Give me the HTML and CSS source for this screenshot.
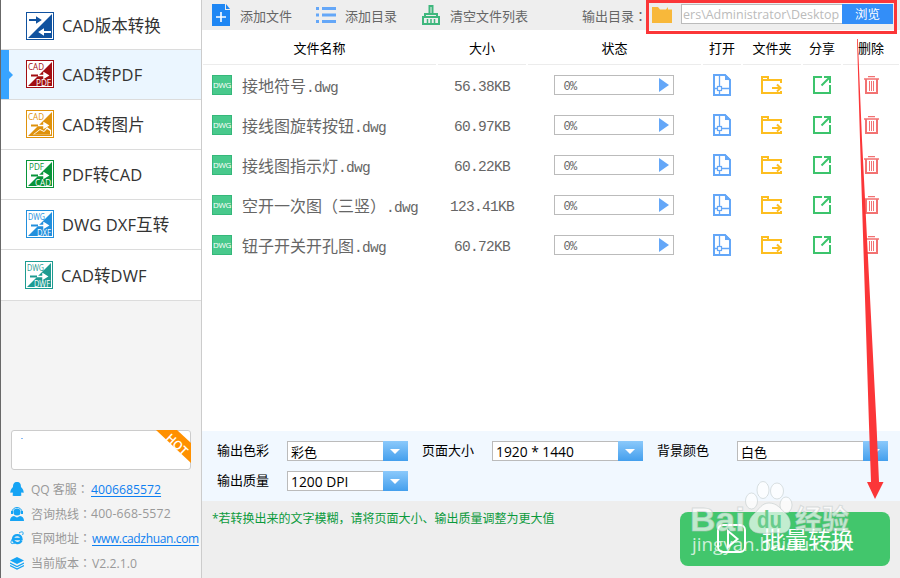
FILE: index.html
```html
<!DOCTYPE html>
<html lang="zh-CN">
<head>
<meta charset="utf-8">
<title>CAD转换器</title>
<link rel="stylesheet" href="styles.css">
</head>
<body>
<svg class="defs" width="0" height="0">
  <symbol id="open" viewBox="0 0 18 22"><path d="M1 1h11l5 5v15H1zM6.500 1v20M1 14.500h16" fill="none" stroke="#64a7f8" stroke-width="1.300"/><path d="M1 1h11l5 5v15H1z" fill="none" stroke="#64a7f8" stroke-width="2"/><path d="M12 0v6h6z" fill="#64a7f8"/><rect x="4.500" y="12.500" width="4" height="4" fill="#fff" stroke="#64a7f8" stroke-width="1.200"/></symbol>
  <symbol id="folder" viewBox="0 0 22 18"><path d="M20 7V4H1v13h19v-2M1 4V1h6v3" fill="none" stroke="#fdbe20" stroke-width="2"/><path d="M11 12h8M16 8.500l3.500 3.500-3.500 3.500" fill="none" stroke="#fdbe20" stroke-width="2"/></symbol>
  <symbol id="share" viewBox="0 0 18 18"><path d="M9 1H1v16h16V9M8.500 9.500 16 2" fill="none" stroke="#3cc46c" stroke-width="2"/><path d="M11 0h7v7h-2V2h-5z" fill="#3cc46c"/></symbol>
  <symbol id="trash" viewBox="0 0 16 18"><path d="M4 .5h7M0 3h15" fill="none" stroke="#f27272" stroke-width="1.500"/><path d="M2 3v14h11V3" fill="none" stroke="#f27272" stroke-width="2"/><path d="M5.500 5v10M7.500 5v10M9.500 5v10" stroke="#f27272"/></symbol>
</svg>
<div class="app">
  <aside class="sidebar">
    <nav class="menu">
      <div class="item first"><svg class="logo" viewBox="0 0 28 28"><rect x=".5" y=".5" width="27" height="27" fill="#fff" stroke="#10529f"/><path d="M26 2v24H2z" fill="#10529f"/><path d="M3 8h8M11 6v4l3-2z" stroke="#10529f" fill="#10529f" stroke-width="2"/><path d="M25 20h-8M17 18v4l-3-2z" stroke="#fff" fill="#fff" stroke-width="2"/></svg><span>CAD版本转换</span></div>
      <div class="item active"><svg class="logo" viewBox="0 0 28 28"><rect x=".5" y=".5" width="27" height="27" fill="#fff" stroke="#a20e12"/><path d="M26 2v24H2z" fill="#a20e12"/><path d="M5 15.500h7" stroke="#a20e12" stroke-width="2"/><path d="M12 15.500h6M18 13l4 2.500-4 2.500z" stroke="#fff" stroke-width="1.500" fill="#fff"/><text x="2" y="10" class="tiny" textLength="16" lengthAdjust="spacingAndGlyphs" fill="#a20e12">CAD</text><text x="10" y="25.500" class="tiny" textLength="15" lengthAdjust="spacingAndGlyphs" fill="#fff">PDF</text></svg><span>CAD转PDF</span></div>
      <div class="item"><svg class="logo" viewBox="0 0 28 28"><rect x=".5" y=".5" width="27" height="27" fill="#fff" stroke="#df920c"/><path d="M26 2v24H2z" fill="#df920c"/><path d="M7 24.500 14 19l4 2 3-4 4 3v4.500z" fill="#fff"/><path d="M8 24.500 14 20l4 2 3-3 3 2v3.500z" fill="#df920c"/><path d="M5 15.500h7" stroke="#df920c" stroke-width="2"/><path d="M12 15.500h6M18 13l4 2.500-4 2.500z" stroke="#fff" stroke-width="1.500" fill="#fff"/><text x="2" y="10" class="tiny" textLength="16" lengthAdjust="spacingAndGlyphs" fill="#df920c">CAD</text></svg><span>CAD转图片</span></div>
      <div class="item"><svg class="logo" viewBox="0 0 28 28"><rect x=".5" y=".5" width="27" height="27" fill="#fff" stroke="#08943a"/><path d="M26 2v24H2z" fill="#08943a"/><path d="M5 15.500h7" stroke="#08943a" stroke-width="2"/><path d="M12 15.500h6M18 13l4 2.500-4 2.500z" stroke="#fff" stroke-width="1.500" fill="#fff"/><text x="3" y="10" class="tiny" textLength="15" lengthAdjust="spacingAndGlyphs" fill="#08943a">PDF</text><text x="9" y="25.500" class="tiny" textLength="16" lengthAdjust="spacingAndGlyphs" fill="#fff">CAD</text></svg><span>PDF转CAD</span></div>
      <div class="item"><svg class="logo" viewBox="0 0 28 28"><rect x=".5" y=".5" width="27" height="27" fill="#fff" stroke="#228fdc"/><path d="M26 2v24H2z" fill="#228fdc"/><path d="M5 15.500h7" stroke="#228fdc" stroke-width="2"/><path d="M12 15.500h6M18 13l4 2.500-4 2.500z" stroke="#fff" stroke-width="1.500" fill="#fff"/><text x="2" y="10" class="tiny" textLength="17" lengthAdjust="spacingAndGlyphs" fill="#228fdc">DWG</text><text x="11" y="25.500" class="tiny" textLength="14" lengthAdjust="spacingAndGlyphs" fill="#fff">DXF</text></svg><span>DWG DXF互转</span></div>
      <div class="item last"><svg class="logo" viewBox="0 0 28 28"><rect x=".5" y=".5" width="27" height="27" fill="#fff" stroke="#1d9b91"/><path d="M26 2v24H2z" fill="#1d9b91"/><path d="M5 15.500h7" stroke="#1d9b91" stroke-width="2"/><path d="M12 15.500h6M18 13l4 2.500-4 2.500z" stroke="#fff" stroke-width="1.500" fill="#fff"/><text x="2" y="10" class="tiny" textLength="17" lengthAdjust="spacingAndGlyphs" fill="#1d9b91">DWG</text><text x="9" y="25.500" class="tiny" textLength="16" lengthAdjust="spacingAndGlyphs" fill="#fff">DWF</text></svg><span>CAD转DWF</span></div>
    </nav>
    <div class="promo"><span class="dash"></span><svg class="hot" width="36" height="34" viewBox="0 0 36 34"><path d="M1 0h21l14 13v20z" fill="#ff9000"/><text transform="translate(10 9) rotate(43)" textLength="25" lengthAdjust="spacingAndGlyphs" fill="#fff">HOT</text></svg></div>
    <div class="contacts">
      <div class="contact"><svg width="14" height="14" viewBox="0 0 14 14"><path d="M7 0C4 0 3 2 3 5 1 7 0 9 .5 11c.7 0 1.200-.5 1.700-1 .2 1 .6 1.500 1 2-1 .5-1 2 .8 2h6c1.800 0 1.800-1.500.8-2 .4-.5.800-1 1-2 .5.5 1 1 1.700 1C14 9 13 7 11 5c0-3-1-5-4-5z" fill="#16a4f4"/></svg><span class="label">QQ 客服<em lang="zh-TW">：</em></span><a class="tel">4006685572</a></div>
      <div class="contact"><svg width="14" height="14" viewBox="0 0 14 14"><circle cx="7" cy="5" r="3.600" fill="#16a4f4"/><path d="M2 5a5 4.500 0 0 1 10 0" fill="none" stroke="#16a4f4"/><path d="M1 4h2v3H1zM11 4h2v3h-2zM0 14c0-3 1.500-4.500 4-5l3 1.500L10 9c2.500.5 4 2 4 5z" fill="#16a4f4"/></svg><span class="label">咨询热线<em lang="zh-TW">：</em></span><span class="tel hotline">400-668-5572</span></div>
      <div class="contact"><svg width="14" height="14" viewBox="0 0 14 14"><path d="M11.500 9.500C9 14 3 12 3 8c0-5 8-5.500 8.500 0H4" fill="none" stroke="#16a4f4" stroke-width="2.300"/><path d="M9 2c4-2.500 5-.5 3.500 2M3 7c-3 4-3 7 2 5" fill="none" stroke="#16a4f4"/></svg><span class="label">官网地址<em lang="zh-TW">：</em></span><a class="site">www.cadzhuan.com</a></div>
      <div class="contact"><svg width="14" height="14" viewBox="0 0 14 14"><path d="m7 1 7 3.500L7 8 0 4.500z" fill="#16a4f4"/><path d="m0 7 7 3.500L14 7M0 9.500 7 13l7-3.500" fill="none" stroke="#16a4f4" stroke-width="1.300"/></svg><span class="label">当前版本<em lang="zh-TW">：</em></span><span class="ver">V2.2.1.0</span></div>
    </div>
  </aside>
  <main class="main">
    <header class="toolbar">
      <div class="tool add"><svg width="18" height="22" viewBox="0 0 18 22"><path d="M0 0h13v6h5v16H0z" fill="#1f87f4"/><path d="m14 0 4 5h-4z" fill="#1f87f4"/><path d="M4 13h10M9 8v10" stroke="#fff" stroke-width="1.600"/></svg><span>添加文件</span></div>
      <div class="tool list"><svg width="20" height="16" viewBox="0 0 20 16"><path d="M0 1.500h3M6 1.500h14M0 8h3M6 8h14M0 14.500h3M6 14.500h14" stroke="#64a7f8" stroke-width="2.900"/></svg><span>添加目录</span></div>
      <div class="tool clear"><svg width="18" height="20" viewBox="0 0 18 20"><path d="M1 19v-7h16v7zM3 12V9h12v3M7.500 9V1h3v8" fill="none" stroke="#3eb77d" stroke-width="2"/><path d="M5.500 14v5M9 14v5M12.500 14v5" stroke="#3eb77d" stroke-width="1.500"/></svg><span>清空文件列表</span></div>
      <span class="out">输出目录<em lang="zh-TW">：</em></span>
      <svg class="dir" width="20" height="16" viewBox="0 0 20 16"><path d="M0 0h6l2 2.500h6L16 0v2.500h4V16H0z" fill="#f8b83a"/></svg>
      <div class="path"><span>ers\Administrator\Desktop</span></div>
      <button class="browse">浏览</button>
    </header>
    <section class="files">
      <div class="row head"><span>文件名称</span><span>大小</span><span>状态</span><span>打开</span><span>文件夹</span><span>分享</span><span>删除</span></div>
      <div class="row"><div class="name"><b class="dwg">DWG</b><span>接地符号<i>.dwg</i></span></div><span class="size">56.38KB</span><div class="bar"><span>0%</span><b></b></div><svg width="18" height="22"><use href="#open"/></svg><svg width="22" height="18"><use href="#folder"/></svg><svg width="18" height="18"><use href="#share"/></svg><svg class="del" width="16" height="18"><use href="#trash"/></svg></div>
      <div class="row"><div class="name"><b class="dwg">DWG</b><span>接线图旋转按钮<i>.dwg</i></span></div><span class="size">60.97KB</span><div class="bar"><span>0%</span><b></b></div><svg width="18" height="22"><use href="#open"/></svg><svg width="22" height="18"><use href="#folder"/></svg><svg width="18" height="18"><use href="#share"/></svg><svg class="del" width="16" height="18"><use href="#trash"/></svg></div>
      <div class="row"><div class="name"><b class="dwg">DWG</b><span>接线图指示灯<i>.dwg</i></span></div><span class="size">60.22KB</span><div class="bar"><span>0%</span><b></b></div><svg width="18" height="22"><use href="#open"/></svg><svg width="22" height="18"><use href="#folder"/></svg><svg width="18" height="18"><use href="#share"/></svg><svg class="del" width="16" height="18"><use href="#trash"/></svg></div>
      <div class="row"><div class="name"><b class="dwg">DWG</b><span>空开一次图（三竖）<i>.dwg</i></span></div><span class="size">123.41KB</span><div class="bar"><span>0%</span><b></b></div><svg width="18" height="22"><use href="#open"/></svg><svg width="22" height="18"><use href="#folder"/></svg><svg width="18" height="18"><use href="#share"/></svg><svg class="del" width="16" height="18"><use href="#trash"/></svg></div>
      <div class="row"><div class="name"><b class="dwg">DWG</b><span>钮子开关开孔图<i>.dwg</i></span></div><span class="size">60.72KB</span><div class="bar"><span>0%</span><b></b></div><svg width="18" height="22"><use href="#open"/></svg><svg width="22" height="18"><use href="#folder"/></svg><svg width="18" height="18"><use href="#share"/></svg><svg class="del" width="16" height="18"><use href="#trash"/></svg></div>
    </section>
    <section class="settings">
      <label>输出色彩</label><div class="select"><span>彩色</span><b></b></div>
      <label>页面大小</label><div class="select"><span>1920 * 1440</span><b></b></div>
      <label>背景颜色</label><div class="select"><span>白色</span><b></b></div>
      <label>输出质量</label><div class="select"><span>1200 DPI</span><b></b></div>
    </section>
    <footer class="footer">
      <p class="hint">*若转换出来的文字模糊，请将页面大小、输出质量调整为更大值</p>
      <button class="convert"><svg width="30" height="30" viewBox="0 0 30 30"><rect x="1" y="1" width="27" height="27" rx="5" fill="none" stroke="#fff" stroke-width="2"/><path d="m11 7 9.500 8L11 23z" fill="none" stroke="#fff" stroke-width="2"/></svg><span>批量转换</span></button>
    </footer>
  </main>
  <svg class="overlay" width="900" height="578" viewBox="0 0 900 578">
    <g fill="#fff" fill-opacity=".68" stroke="#b9c3c3" stroke-opacity=".5">
      <ellipse cx="751.500" cy="501" rx="6" ry="8"/><ellipse cx="763" cy="490" rx="6" ry="8.500"/><ellipse cx="777" cy="491" rx="6.500" ry="8"/><ellipse cx="786" cy="505" rx="6" ry="8"/>
      <path d="M769 503c-7 0-10 6-15 11-7 6-7 17 4 19 7 1 14-1 22 0 11 1 13-11 7-18-6-6-10-12-18-12z"/>
      <text x="690" y="531" class="bai" textLength="55" lengthAdjust="spacingAndGlyphs">Bai</text>
      <text x="795" y="529" class="jy" textLength="54" lengthAdjust="spacingAndGlyphs">经验</text>
    </g>
    <text x="757" y="528" class="du" textLength="25" lengthAdjust="spacingAndGlyphs" fill="#69cc8c">du</text>
    <text x="692" y="551" class="url" textLength="160" lengthAdjust="spacingAndGlyphs" fill="#fff" fill-opacity=".75">jingyan.baidu.com</text>
    <rect x="647.500" y="1.500" width="248" height="31" fill="none" stroke="#fb3638" stroke-width="3"/>
    <path d="M857 39h.8L862 140l14.500 285 2.500 57h4.500L875 499l-8-17h4l-2-57-9-285z" fill="#fb3638"/>
  </svg>
</div>
</body>
</html>
```
FILE: styles.css
```css
* { box-sizing: border-box; }
body { margin: 0; font-family: "Open Sans", "Noto Sans CJK SC", sans-serif; font-size: 13px; color: #000; }
.defs { position: absolute; }
button { border: 0; padding: 0; font-family: inherit; }
svg { display: block; flex: none; }
em { font-style: normal; font-family: "Noto Sans CJK TC", sans-serif; line-height: 1; }
.app { position: relative; display: flex; width: 900px; height: 578px; overflow: hidden; white-space: nowrap; }
.tiny { font: 8.500px "Open Sans", sans-serif; }

.sidebar { width: 202px; background: #f4f4f4; border-left: 1px solid #686868; border-right: 1px solid #ccc; display: flex; flex-direction: column; }
.item { height: 50px; display: flex; align-items: center; gap: 8px; padding: 0 0 1px 25px; background: #fff; border-bottom: 1px solid #dcdcdc; color: #333; font-size: 16.500px; }
.item span { letter-spacing: .08px; }
.first { padding: 3px 0 0 25px; }
.first span { margin-top: -2px; letter-spacing: 0; }
.active { background: linear-gradient(#38a4ff, #38a4ff) 0 0 / 8px 50px no-repeat #ebf6ff; position: relative; }
.active::after { content: ""; position: absolute; left: 8px; top: 21px; border: 4px solid transparent; border-left-color: #38a4ff; border-right: 0; }
.last { height: 51px; padding: 0 0 0 24px; }
.logo { width: 28px; height: 28px; }
.promo { margin: 129px 10px 0; height: 40px; background: #fff; border: 1px solid #ccc; border-radius: 3px; display: flex; justify-content: space-between; }
.dash { width: 2px; height: 1px; margin: 7px 0 0 9px; background: #8cbcf5; }
.hot { margin: -1px -1px 0 0; }
.hot text { font: 600 12px "Open Sans", sans-serif; }
.contacts { margin-top: 7px; color: #999; font-size: 12px; }
.contact { height: 24.600px; display: flex; align-items: center; padding-left: 9px; }
.label { width: 60px; margin-left: 7px; }
.tel, .ver { font-size: 12.250px; }
.hotline { letter-spacing: .16px; }
a { color: #0e7ff0; text-decoration: underline; text-underline-offset: 2px; }
.site { margin-left: 1px; font-size: 12px; letter-spacing: -.35px; }
.ver { margin-left: 1px; }

.main { width: 698px; display: flex; flex-direction: column; background: #fff; }
.toolbar { height: 30px; background: #eee; display: flex; align-items: center; color: #666; }
.tool { display: flex; align-items: center; }
.tool span { padding-top: 1px; }
.add { padding-left: 10px; gap: 10px; }
.list { padding-left: 24px; gap: 9px; }
.clear { padding-left: 25px; gap: 10px; }
.out { width: 70px; margin-left: 54px; padding-top: 1px; }
.path { width: 161px; height: 20px; margin: -2px 0 0 9px; border: 1px solid #bbb; border-right: 0; background: #fff; color: #bbb; font-size: 12.500px; line-height: 19px; overflow: hidden; }
.path span { margin-left: 1px; }
.browse { width: 51px; height: 20px; margin-top: -2px; background: #338ef8; color: #fff; font-size: 12.500px; line-height: 22px; }

.files { height: 401px; }
.row { height: 40px; display: grid; grid-template-columns: 235px 90px 175px 40px 60px 40px 58px; align-items: center; justify-items: center; color: #666; }
.head { height: 35px; color: #000; }
.head span { height: 35px; width: calc(100% - 2px); text-align: center; line-height: 36px; border-bottom: 1px solid #ececec; }
.name { justify-self: start; display: flex; align-items: center; padding-left: 10px; gap: 10px; font-size: 16px; }
.name span { line-height: 24px; padding-top: 1px; }
.dwg { width: 20px; height: 20px; background: #48c98c; border: 1px solid #35b87a; color: #fff; font: 8px/18px "Open Sans", sans-serif; letter-spacing: -.4px; text-align: center; }
.name i, .size { font: normal 14.500px "Liberation Mono", monospace; letter-spacing: -.7px; }
.size { padding-top: 3px; }
.bar { width: 120px; height: 20px; margin-right: 2px; border: 1px solid #bbb; display: flex; align-items: center; justify-content: space-between; padding: 0 4px 0 9px; }
.bar span { font: 12px "Liberation Mono", monospace; letter-spacing: -.6px; padding-top: 3px; }
.bar b { border: 7px solid transparent; border-left: 10px solid #64a7f8; border-right: 0; }
.del { margin-left: 2px; }

.settings { height: 70px; background: #f1f8ff; display: grid; grid-template-columns: 70px 135px 70px 165px 80px 151px; grid-auto-rows: 20px; row-gap: 10px; padding: 10px 0 0 15px; }
.settings label { line-height: 18px; }
.select { height: 20px; width: 151px; background: #fff; border: 1px solid #bbb; display: flex; justify-content: space-between; font-size: 13.800px; line-height: 20px; padding-left: 3px; }
.select:nth-child(2), .select:nth-child(8) { width: 121px; }
.select:nth-child(2) span, .select:nth-child(6) span { font-size: 13px; }
.select b { width: 25px; height: 20px; margin: -1px -1px 0 0; background: linear-gradient(#8bc9fb, #449fed); display: flex; align-items: center; justify-content: center; }
.select b::after { content: ""; border: 5px solid transparent; border-top-color: #fff; border-bottom: 0; margin-right: 1px; }

.footer { height: 77px; background: #eee; display: flex; justify-content: space-between; }
.hint { margin: 9px 0 0 10px; font-size: 12px; line-height: 18px; color: #0b9a3c; }
.convert { width: 210px; height: 54px; margin: 11px 10px 0 0; border-radius: 8px; background: #42c66c; color: #fff; display: flex; align-items: center; padding-left: 37px; gap: 15px; font-size: 23px; }
.convert span { margin-top: -3px; }

.overlay { position: absolute; left: 0; top: 0; pointer-events: none; }
.bai { font: bold 34px "Liberation Sans", sans-serif; }
.du { font: bold 23px "Liberation Sans", sans-serif; }
.jy { font: bold 27px "Noto Sans CJK SC", sans-serif; }
.url { font: 19px "Open Sans", sans-serif; }
```
